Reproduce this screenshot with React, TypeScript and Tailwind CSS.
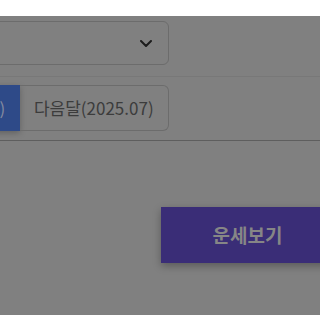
import React from 'react';

const ChevronDown: React.FC = () => (
  <svg width="12" height="7" viewBox="0 0 12 7" fill="none">
    <path d="M1 1l5 5 5-5" stroke="#1c1c1c" strokeWidth="2" strokeLinecap="round" strokeLinejoin="round" />
  </svg>
);

const App: React.FC = () => {
  return (
    <div className="w-[320px] h-[315px] overflow-hidden bg-[#808080] font-['Noto_Sans_CJK_KR','Noto_Sans',sans-serif]">
      <div className="h-4 bg-white" />

      {/* Month select */}
      <div className="-ml-[129px] w-[298px] mt-[5px] h-[44px] rounded-md border border-[#6c6c6c] flex items-center justify-end pr-[16px]">
        <ChevronDown />
      </div>

      <div className="mt-[11px] h-px w-full bg-[#787878]" />

      {/* Month toggle */}
      <div className="-ml-[129px] w-[298px] mt-[8px] h-[46px] flex">
        <button className="flex-1 bg-[#2e4a88] rounded-l-md text-[17px] text-[#848aa0] shadow-[0_2px_6px_rgba(0,0,0,0.25)]">
          이번달(2025.06)
        </button>
        <button className="flex-1 rounded-r-md border border-l-0 border-[#6c6c6c] text-[17px] text-[#3c3c3c]">
          다음달(2025.07)
        </button>
      </div>

      <div className="mt-[9px] h-px w-full bg-[#5e5e5e]" />

      {/* Submit */}
      <button className="ml-[161px] mt-[66px] w-[173px] h-[56px] bg-[#3a2d77] text-[19px] font-bold text-[#868686] shadow-[0_3px_8px_rgba(0,0,0,0.3)]">
        운세보기
      </button>
    </div>
  );
};

export default App;
